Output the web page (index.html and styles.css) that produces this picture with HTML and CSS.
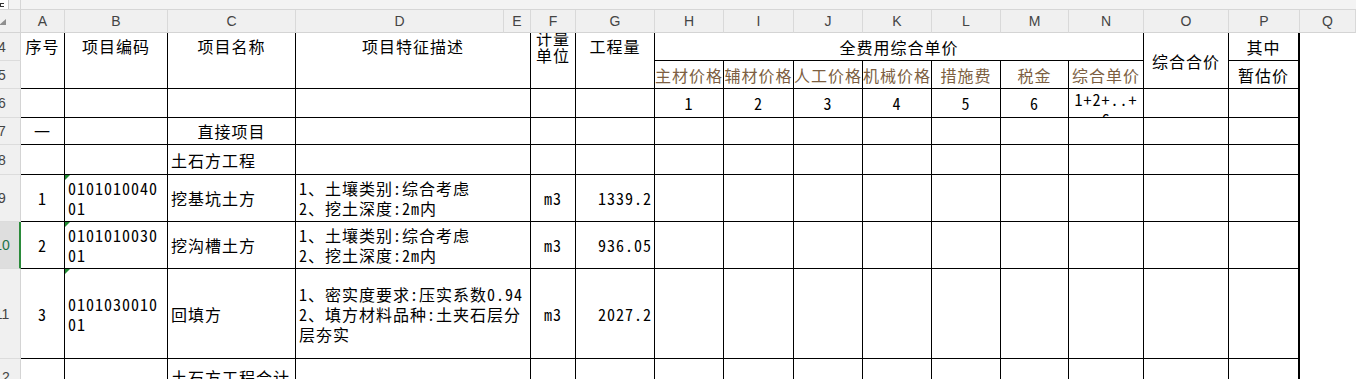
FILE: index.html
```html
<!DOCTYPE html>
<html lang="zh-CN">
<head>
<meta charset="utf-8">
<title>工程量清单</title>
<link rel="stylesheet" href="styles.css">
</head>
<body>
<div class="topbar"><div class="namebox"><span class="nb-mark"></span></div><div class="tb-gap"></div><div class="fbar"></div></div>
<div class="sheet">
  <div class="corner"><span class="corner-tri"></span></div>
  <div class="ch">A</div><div class="ch">B</div><div class="ch">C</div><div class="ch">D</div><div class="ch">E</div><div class="ch">F</div><div class="ch">G</div><div class="ch">H</div><div class="ch">I</div><div class="ch">J</div><div class="ch">K</div><div class="ch">L</div><div class="ch">M</div><div class="ch">N</div><div class="ch">O</div><div class="ch">P</div><div class="ch">Q</div>

  <div class="rh"><span>4</span></div>
  <div class="c rs2 top ctr">序号</div>
  <div class="c rs2 top ctr">项目编码</div>
  <div class="c rs2 top ctr">项目名称</div>
  <div class="c rs2 cs2 top ctr">项目特征描述</div>
  <div class="c rs2 f4 clip"><div class="unit">计量单位</div></div>
  <div class="c rs2 top ctr">工程量</div>
  <div class="c cs7 ctr">全费用综合单价</div>
  <div class="c rs2 ctr">综合合价</div>
  <div class="c ctr pc">其中</div>

  <div class="rh"><span>5</span></div>
  <div class="c ctr lbl">主材价格</div>
  <div class="c ctr lbl">辅材价格</div>
  <div class="c ctr lbl">人工价格</div>
  <div class="c ctr lbl">机械价格</div>
  <div class="c ctr lbl">措施费</div>
  <div class="c ctr lbl">税金</div>
  <div class="c ctr lbl">综合单价</div>
  <div class="c ctr pc">暂估价</div>

  <div class="rh"><span>6</span></div>
  <div class="c"></div><div class="c"></div><div class="c"></div><div class="c cs2"></div><div class="c"></div><div class="c"></div>
  <div class="c ctr">1</div><div class="c ctr">2</div><div class="c ctr">3</div><div class="c ctr">4</div><div class="c ctr">5</div><div class="c ctr">6</div>
  <div class="c ctr n6">1+2+..+6</div>
  <div class="c"></div><div class="c pc"></div>

  <div class="rh"><span>7</span></div>
  <div class="c ctr">一</div><div class="c"></div><div class="c ctr">直接项目</div><div class="c cs2"></div><div class="c"></div><div class="c"></div>
  <div class="c"></div><div class="c"></div><div class="c"></div><div class="c"></div><div class="c"></div><div class="c"></div><div class="c"></div>
  <div class="c"></div><div class="c pc"></div>

  <div class="rh"><span>8</span></div>
  <div class="c"></div><div class="c"></div><div class="c">土石方工程</div><div class="c cs2"></div><div class="c"></div><div class="c"></div>
  <div class="c"></div><div class="c"></div><div class="c"></div><div class="c"></div><div class="c"></div><div class="c"></div><div class="c"></div>
  <div class="c"></div><div class="c pc"></div>

  <div class="rh"><span>9</span></div>
  <div class="c ctr">1</div>
  <div class="c tri">010101004001</div>
  <div class="c">挖基坑土方</div>
  <div class="c cs2">1、土壤类别:综合考虑<br>2、挖土深度:2m内</div>
  <div class="c ctr">m3</div>
  <div class="c r">1339.2</div>
  <div class="c"></div><div class="c"></div><div class="c"></div><div class="c"></div><div class="c"></div><div class="c"></div><div class="c"></div>
  <div class="c"></div><div class="c pc"></div>

  <div class="rh active"><span>10</span></div>
  <div class="c ctr">2</div>
  <div class="c tri">010101003001</div>
  <div class="c">挖沟槽土方</div>
  <div class="c cs2">1、土壤类别:综合考虑<br>2、挖土深度:2m内</div>
  <div class="c ctr">m3</div>
  <div class="c r">936.05</div>
  <div class="c"></div><div class="c"></div><div class="c"></div><div class="c"></div><div class="c"></div><div class="c"></div><div class="c"></div>
  <div class="c"></div><div class="c pc"></div>

  <div class="rh"><span>11</span></div>
  <div class="c ctr">3</div>
  <div class="c tri">010103001001</div>
  <div class="c">回填方</div>
  <div class="c cs2">1、密实度要求:压实系数0.94<br>2、填方材料品种:土夹石层分层夯实</div>
  <div class="c ctr">m3</div>
  <div class="c r">2027.2</div>
  <div class="c"></div><div class="c"></div><div class="c"></div><div class="c"></div><div class="c"></div><div class="c"></div><div class="c"></div>
  <div class="c"></div><div class="c pc"></div>

  <div class="rh"><span>12</span></div>
  <div class="c"></div><div class="c"></div><div class="c">土石方工程合计</div><div class="c cs2"></div><div class="c"></div><div class="c"></div>
  <div class="c"></div><div class="c"></div><div class="c"></div><div class="c"></div><div class="c"></div><div class="c"></div><div class="c"></div>
  <div class="c"></div><div class="c pc"></div>
</div>
</body>
</html>
```

FILE: styles.css
```css
* { box-sizing: border-box; }
html, body { margin: 0; padding: 0; overflow: hidden; background: #fff; }
body { width: 1356px; height: 379px; font-family: "Liberation Sans", Arial, sans-serif; }

.topbar { display: flex; height: 10px; background: #f3f3f3; border-bottom: 1px solid #d6d6d6; }
.namebox { width: 9px; background: #fff; border-right: 1px solid #c8c8c8; }
.nb-mark { display: block; width: 4px; height: 4px; margin-top: 3px; border-left: 1px solid #333; border-top: 1px solid #333; border-bottom: 1px solid #333; }
.tb-gap { width: 12px; border-right: 1px solid #d6d6d6; }
.fbar { flex: 1; }

.sheet {
  display: grid;
  grid-template-columns: 21px 44px 103px 128px 208px 27px 45px 79px 69px 70px 69px 69px 69px 68px 75px 85px 71px 1fr;
  grid-template-rows: 23px 28px 28px 29px 27px 30px 47px 47px 90px 36px;
}

.corner { background: #f0f0f0; border-right: 1px solid #d4d4d4; border-bottom: 1px solid #d4d4d4; display: flex; align-items: flex-end; padding-bottom: 7px; overflow: hidden; }
.corner-tri { width: 0; height: 0; margin-left: -1px; border-left: 7px solid transparent; border-bottom: 6px solid #8f8f8f; }

.ch { background: #f0f0f0; border-right: 1px solid #d9d9d9; border-bottom: 1px solid #d4d4d4; display: flex; align-items: center; justify-content: center; font-size: 14px; color: #444; }

.rh { grid-column: 1; background: #f0f0f0; border-right: 1px solid #d4d4d4; border-bottom: 1px solid #dcdcdc; display: flex; align-items: center; overflow: hidden; font-size: 14px; color: #444; }
.rh span { flex: none; display: block; width: 30px; margin-left: -13px; text-align: center; white-space: nowrap; }
.rh.active { background: #dedede; color: #217346; border-right: 2px solid #2a8a3a; }

.c {
  position: relative;
  display: flex; align-items: center;
  min-width: 0;
  padding: 0 3px;
  border-right: 1px solid #000; border-bottom: 1px solid #000;
  font-family: "Noto Sans CJK SC", sans-serif;
  font-size: 16px; line-height: 20px; letter-spacing: 1px;
  font-feature-settings: "hwid" 1;
  word-break: break-all;
  color: #000;
}
.ctr { justify-content: center; text-align: center; }
.r { justify-content: flex-end; text-align: right; padding-right: 2px; }
.top { align-items: flex-start; padding-top: 3px; }
.rs2 { grid-row: span 2; }
.cs2 { grid-column: span 2; }
.cs7 { grid-column: span 7; }
.pc { border-right-width: 2px; }
.clip { overflow: hidden; }
.f4 { align-items: flex-start; }
.unit { width: 100%; height: 27px; display: flex; flex-direction: column; justify-content: center; line-height: 16.5px; text-align: center; }
.lbl { color: #7d5f42; white-space: nowrap; padding: 0; }
.n6 { align-items: flex-start; overflow: hidden; }
.tri::before { content: ""; position: absolute; left: 0; top: 0; border-top: 5px solid #1f8a32; border-right: 5px solid transparent; }
```
